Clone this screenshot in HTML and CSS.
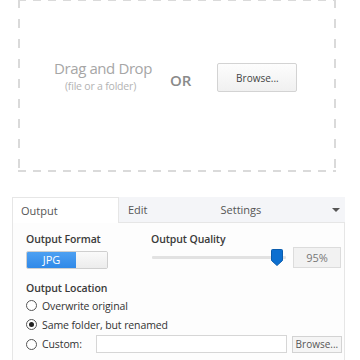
FILE: index.html
```html
<!DOCTYPE html>
<html lang="en">
<head>
<meta charset="UTF-8">
<title>Image Converter</title>
<link rel="stylesheet" href="styles.css">
</head>
<body>
    <div class="dropzone">
        <div class="drop-row">
            <div class="drop-text">
                <div class="drop-title">Drag and Drop</div>
                <div class="drop-sub">(file or a folder)</div>
            </div>
            <div class="or">OR</div>
            <button class="btn-browse">Browse...</button>
        </div>
    </div>

    <div class="tabs">
        <div class="tab active">Output</div>
        <div class="tab">Edit</div>
        <div class="tab tab-settings">Settings</div>
        <span class="caret"></span>
    </div>

    <div class="panel">
        <div class="row-top">
            <div class="col-format">
                <div class="label">Output Format</div>
                <div class="toggle">
                    <span class="toggle-on">JPG</span>
                    <span class="toggle-off"></span>
                </div>
            </div>
            <div class="col-quality">
                <div class="label">Output Quality</div>
                <div class="quality-row">
                    <div class="slider">
                        <div class="track"></div>
                        <svg class="thumb" width="12" height="17" viewBox="0 0 12 17">
                            <path d="M1.5 0.5 H10.5 Q11.5 0.5 11.5 1.5 V11.5 L6 16.5 L0.5 11.5 V1.5 Q0.5 0.5 1.5 0.5 Z" fill="#0c6fd0" stroke="#0a5cad"/>
                        </svg>
                    </div>
                    <div class="quality-box">95%</div>
                </div>
            </div>
        </div>

        <div class="label loc-label">Output Location</div>
        <div class="option"><span class="radio"></span>Overwrite original</div>
        <div class="option"><span class="radio checked"></span>Same folder, but renamed</div>
        <div class="option custom">
            <span class="radio"></span>Custom:
            <span class="path-input"></span>
            <button class="btn-small">Browse...</button>
        </div>
    </div>
</body>
</html>
```

FILE: styles.css
```css
body {
    margin: 0;
    background: #fff;
    font-family: "Open Sans", "Noto Sans", sans-serif;
    color: #333;
    overflow: hidden;
}
.dropzone {
    margin: -1px 0 0 18px;
    width: 318px;
    height: 173px;
    box-sizing: border-box;
    padding-top: 60px;
    background:
        repeating-linear-gradient(90deg, #dadada 0 8px, transparent 8px 15px) top left / 100% 2px no-repeat,
        repeating-linear-gradient(90deg, #dadada 0 8px, transparent 8px 15px) bottom left / 100% 2px no-repeat,
        repeating-linear-gradient(180deg, #dadada 0 9px, transparent 9px 20px) top left / 2px 100% no-repeat,
        repeating-linear-gradient(180deg, #dadada 0 9px, transparent 9px 20px) top right / 2px 100% no-repeat;
}
.drop-row {
    display: flex;
    align-items: flex-start;
    padding-left: 36px;
}
.drop-text {
    text-align: center;
    width: 97px;
    white-space: nowrap;
}
.drop-title {
    font-size: 15px;
    letter-spacing: -0.4px;
    line-height: 19px;
    color: #a6a6a6;
}
.drop-sub {
    margin-top: 2px;
    font-size: 10.5px;
    letter-spacing: -0.2px;
    line-height: 13px;
    color: #b3b3b3;
    padding-right: 4px;
}
.or {
    margin-left: 19px;
    margin-top: 12px;
    font-size: 15px;
    line-height: 19px;
    color: #8a8a8a;
    font-weight: 600;
}
.btn-browse {
    margin-left: 26px;
    margin-top: 4px;
    width: 80px;
    height: 29px;
    border: 1px solid #d3d3d3;
    border-radius: 2px;
    background: linear-gradient(#fdfdfd, #f0f0f0);
    font-family: inherit;
    font-size: 10px;
    color: #444;
    padding: 0;
}

.tabs {
    display: flex;
    align-items: center;
    margin: 25px 0 0 12px;
    width: 333px;
    height: 25px;
    background: #f4f5f8;
    font-size: 11px;
    color: #555;
}
.tab {
    height: 25px;
    line-height: 25px;
    box-sizing: border-box;
}
.tab.active {
    width: 107px;
    padding-left: 8px;
    background: #fff;
    border: 1px solid #e6e6e6;
    border-bottom: none;
    margin-bottom: -1px;
    height: 26px;
    position: relative;
    z-index: 1;
}
.tab:nth-child(2) {
    margin-left: 9px;
}
.tab-settings {
    margin-left: 73px;
}
.caret {
    margin-left: auto;
    margin-right: 5px;
    width: 0;
    height: 0;
    border-left: 4px solid transparent;
    border-right: 4px solid transparent;
    border-top: 4px solid #555;
}

.panel {
    margin-left: 12px;
    width: 333px;
    height: 150px;
    box-sizing: border-box;
    border: 1px solid #e6e6e6;
    background: #fdfdfd;
    padding: 8px 0 0 13px;
}
.label {
    font-size: 10.5px;
    font-weight: 600;
    letter-spacing: -0.1px;
    line-height: 16px;
    color: #3a3a3a;
}
.row-top {
    display: flex;
}
.col-format {
    width: 125px;
}
.toggle {
    display: flex;
    width: 82px;
    height: 18px;
    margin-top: 4px;
    border: 1px solid #cfcfcf;
    border-radius: 2px;
    box-sizing: border-box;
    overflow: hidden;
}
.toggle-on {
    width: 49px;
    background: linear-gradient(#4da0f2, #3089e8);
    color: #fff;
    font-size: 11px;
    line-height: 16px;
    text-align: center;
}
.toggle-off {
    flex: 1;
    background: linear-gradient(#fafafa, #ececec);
}
.quality-row {
    display: flex;
    align-items: center;
}
.slider {
    position: relative;
    width: 135px;
    height: 24px;
}
.track {
    position: absolute;
    left: 1px;
    right: 0;
    top: 9px;
    height: 3px;
    background: #e2e2e2;
    border-radius: 1px;
}
.thumb {
    position: absolute;
    left: 120px;
    top: 2px;
}
.quality-box {
    margin-left: 7px;
    width: 48px;
    height: 21px;
    box-sizing: border-box;
    border: 1px solid #dcdcdc;
    background: #f2f2f2;
    font-size: 11px;
    line-height: 19px;
    text-align: center;
    color: #777;
    margin-top: -3px;
}
.loc-label {
    margin-top: 9px;
}
.option {
    display: flex;
    align-items: center;
    height: 19px;
    font-size: 10.5px;
    letter-spacing: -0.1px;
    color: #333;
}
.radio {
    width: 11px;
    height: 11px;
    border: 1px solid #555;
    border-radius: 50%;
    box-sizing: border-box;
    margin-right: 5px;
    position: relative;
    background: #fff;
}
.radio.checked::after {
    content: "";
    position: absolute;
    left: 2px;
    top: 2px;
    width: 5px;
    height: 5px;
    border-radius: 50%;
    background: #222;
}
.custom {
    height: 20px;
}
.path-input {
    margin-left: 14px;
    width: 191px;
    height: 18px;
    box-sizing: border-box;
    border: 1px solid #d6d6d6;
    background: #fff;
}
.btn-small {
    margin-left: 5px;
    width: 50px;
    height: 17px;
    border: 1px solid #d3d3d3;
    background: #f5f5f5;
    font-family: inherit;
    font-size: 10px;
    color: #555;
    padding: 0;
}
```
